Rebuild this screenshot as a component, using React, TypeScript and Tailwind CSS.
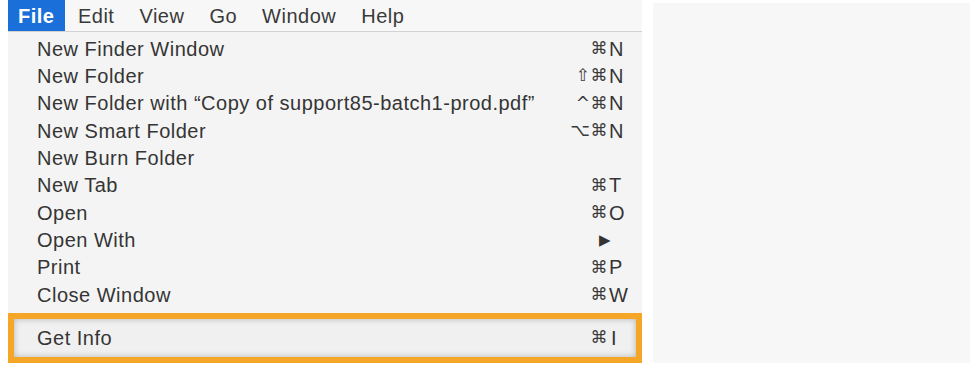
import React from 'react';

type Item = { label: string; mods?: string; key?: string; arrow?: boolean };

const items: Item[] = [
  { label: 'New Finder Window', mods: '⌘', key: 'N' },
  { label: 'New Folder', mods: '⇧⌘', key: 'N' },
  { label: 'New Folder with “Copy of support85-batch1-prod.pdf”', mods: '^⌘', key: 'N' },
  { label: 'New Smart Folder', mods: '⌥⌘', key: 'N' },
  { label: 'New Burn Folder' },
  { label: 'New Tab', mods: '⌘', key: 'T' },
  { label: 'Open', mods: '⌘', key: 'O' },
  { label: 'Open With', arrow: true },
  { label: 'Print', mods: '⌘', key: 'P' },
  { label: 'Close Window', mods: '⌘', key: 'W' },
];

const menus = ['File', 'Edit', 'View', 'Go', 'Window', 'Help'];

const Shortcut = ({ item }: { item: Item }) => {
  if (item.arrow) {
    return <span className="w-[36px] pl-[7px] text-[15px] leading-none text-[#333]">▶</span>;
  }
  return (
    <span className="flex items-center">
      <span className="text-right font-['DejaVu_Sans',sans-serif] text-[17px] text-[#3a3a3a]">{item.mods}</span>
      <span className="w-[20px] pl-[1px] text-[20px]">{item.key}</span>
    </span>
  );
};

const Row = ({ item }: { item: Item }) => (
  <div className="flex h-[27.33px] items-center pl-[29px] pr-[14px]">
    <span className="flex-1">{item.label}</span>
    {(item.mods || item.arrow) && <Shortcut item={item} />}
  </div>
);

export default function App() {
  return (
    <div className="flex h-[379px] w-[975px] bg-white font-['Liberation_Sans',Arial,sans-serif] text-[20px] tracking-[0.5px] text-[#353535]">
      <div className="ml-[8px] flex h-[363px] w-[634px] flex-col bg-[#f4f4f4]">
        {/* menu bar */}
        <div className="flex h-[32px] items-center border-b border-[#d2d2d2] bg-[#f7f7f7]">
          {menus.map((m, i) => (
            <span
              key={m}
              className={
                i === 0
                  ? 'flex h-full items-center bg-[#1b6fd8] pl-[10px] pr-[11px] font-bold text-white'
                  : 'px-[12.5px] pt-[1px] text-[#3a3a3a]'
              }
            >
              {m}
            </span>
          ))}
        </div>

        <div className="pt-[3px]">
          {items.map((it) => (
            <Row key={it.label} item={it} />
          ))}
        </div>

        {/* highlighted Get Info */}
        <div className="mt-[5px] flex h-[50px] items-center border-[6px] border-[#f5a627] bg-[#f0f0f0] pl-[23px] pr-[8px] shadow-[inset_0_0_6px_rgba(0,0,0,0.25)]">
          <span className="flex-1">Get Info</span>
          <span className="flex items-center">
            <span className="font-['DejaVu_Sans',sans-serif] text-[17px] text-[#3a3a3a]">⌘</span>
            <span className="w-[20px] pl-[3px] text-[20px]">I</span>
          </span>
        </div>
      </div>

      <div className="ml-[11px] mt-[3px] h-[360px] w-[317px] bg-[#f7f7f7]" />
    </div>
  );
}
